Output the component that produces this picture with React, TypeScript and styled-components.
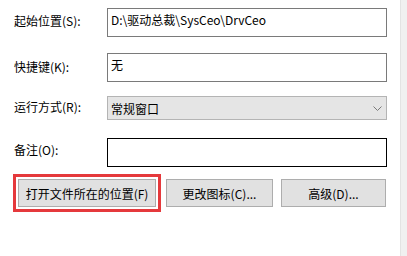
import * as React from 'react'
import styled, { createGlobalStyle } from 'styled-components'

const GlobalStyle = createGlobalStyle`
  html, body {
    margin: 0;
    padding: 0;
    background: #fff;
  }
  body {
    font-family: "Noto Sans CJK SC", "Noto Sans", sans-serif;
    font-size: 12px;
    color: #000;
  }
`

const Page = styled.div`
  display: flex;
  width: 407px;
  height: 256px;
  overflow: hidden;
  background: #fff;
`

const Panel = styled.div`
  flex: 1;
  padding: 8px 0 0 14px;
  display: flex;
  flex-direction: column;
`

const Scroll = styled.div`
  width: 6px;
  background: #f0f0f0;
  border-left: 1px solid #e3e3e3;
`

const Row = styled.div<{ gap: number }>`
  display: grid;
  grid-template-columns: 93px 280px;
  align-items: start;
  margin-bottom: ${p => p.gap}px;
`

const Label = styled.div<{ top: number }>`
  padding-top: ${p => p.top}px;
  line-height: 16px;
  white-space: nowrap;
`

const Field = styled.div<{ dark?: boolean }>`
  box-sizing: border-box;
  height: 29px;
  border: 1px solid ${p => (p.dark ? '#000' : '#7a7a7a')};
  padding: 3px 0 0 3px;
  line-height: 16px;
  white-space: nowrap;
`

const Select = styled.div`
  box-sizing: border-box;
  height: 24px;
  border: 1px solid #b4b4b4;
  background: #e5e5e5;
  padding: 0 4px 0 3px;
  display: flex;
  align-items: center;
  justify-content: space-between;
`

const Buttons = styled.div`
  display: flex;
  margin-top: 12px;
  margin-left: 4px;
`

const Button = styled.div<{ w: number; mark?: boolean }>`
  box-sizing: border-box;
  width: ${p => p.w}px;
  height: 28px;
  margin-right: ${p => (p.mark ? 10 : 8)}px;
  border: 1px solid #adadad;
  background: #e1e1e1;
  display: flex;
  align-items: center;
  justify-content: center;
  white-space: nowrap;
  outline: ${p => (p.mark ? '3px solid #e5393c' : 'none')};
  outline-offset: 2px;
`

const Chevron = () => (
  <svg width="9" height="5" viewBox="0 0 9 5">
    <path d="M0.5 0.5 L4.5 4.5 L8.5 0.5" fill="none" stroke="#7a7a7a" strokeWidth="1" />
  </svg>
)

export default function App() {
  return (
    <Page>
      <GlobalStyle />
      <Panel>
        <Row gap={16}>
          <Label top={5}>起始位置(S):</Label>
          <Field>D:\驱动总裁\SysCeo\DrvCeo</Field>
        </Row>
        <Row gap={14}>
          <Label top={6}>快捷键(K):</Label>
          <Field>无</Field>
        </Row>
        <Row gap={18}>
          <Label top={3}>运行方式(R):</Label>
          <Select>
            <span>常规窗口</span>
            <Chevron />
          </Select>
        </Row>
        <Row gap={0}>
          <Label top={4}>备注(O):</Label>
          <Field dark />
        </Row>
        <Buttons>
          <Button w={138} mark>打开文件所在的位置(F)</Button>
          <Button w={107}>更改图标(C)...</Button>
          <Button w={105}>高级(D)...</Button>
        </Buttons>
      </Panel>
      <Scroll />
    </Page>
  )
}
